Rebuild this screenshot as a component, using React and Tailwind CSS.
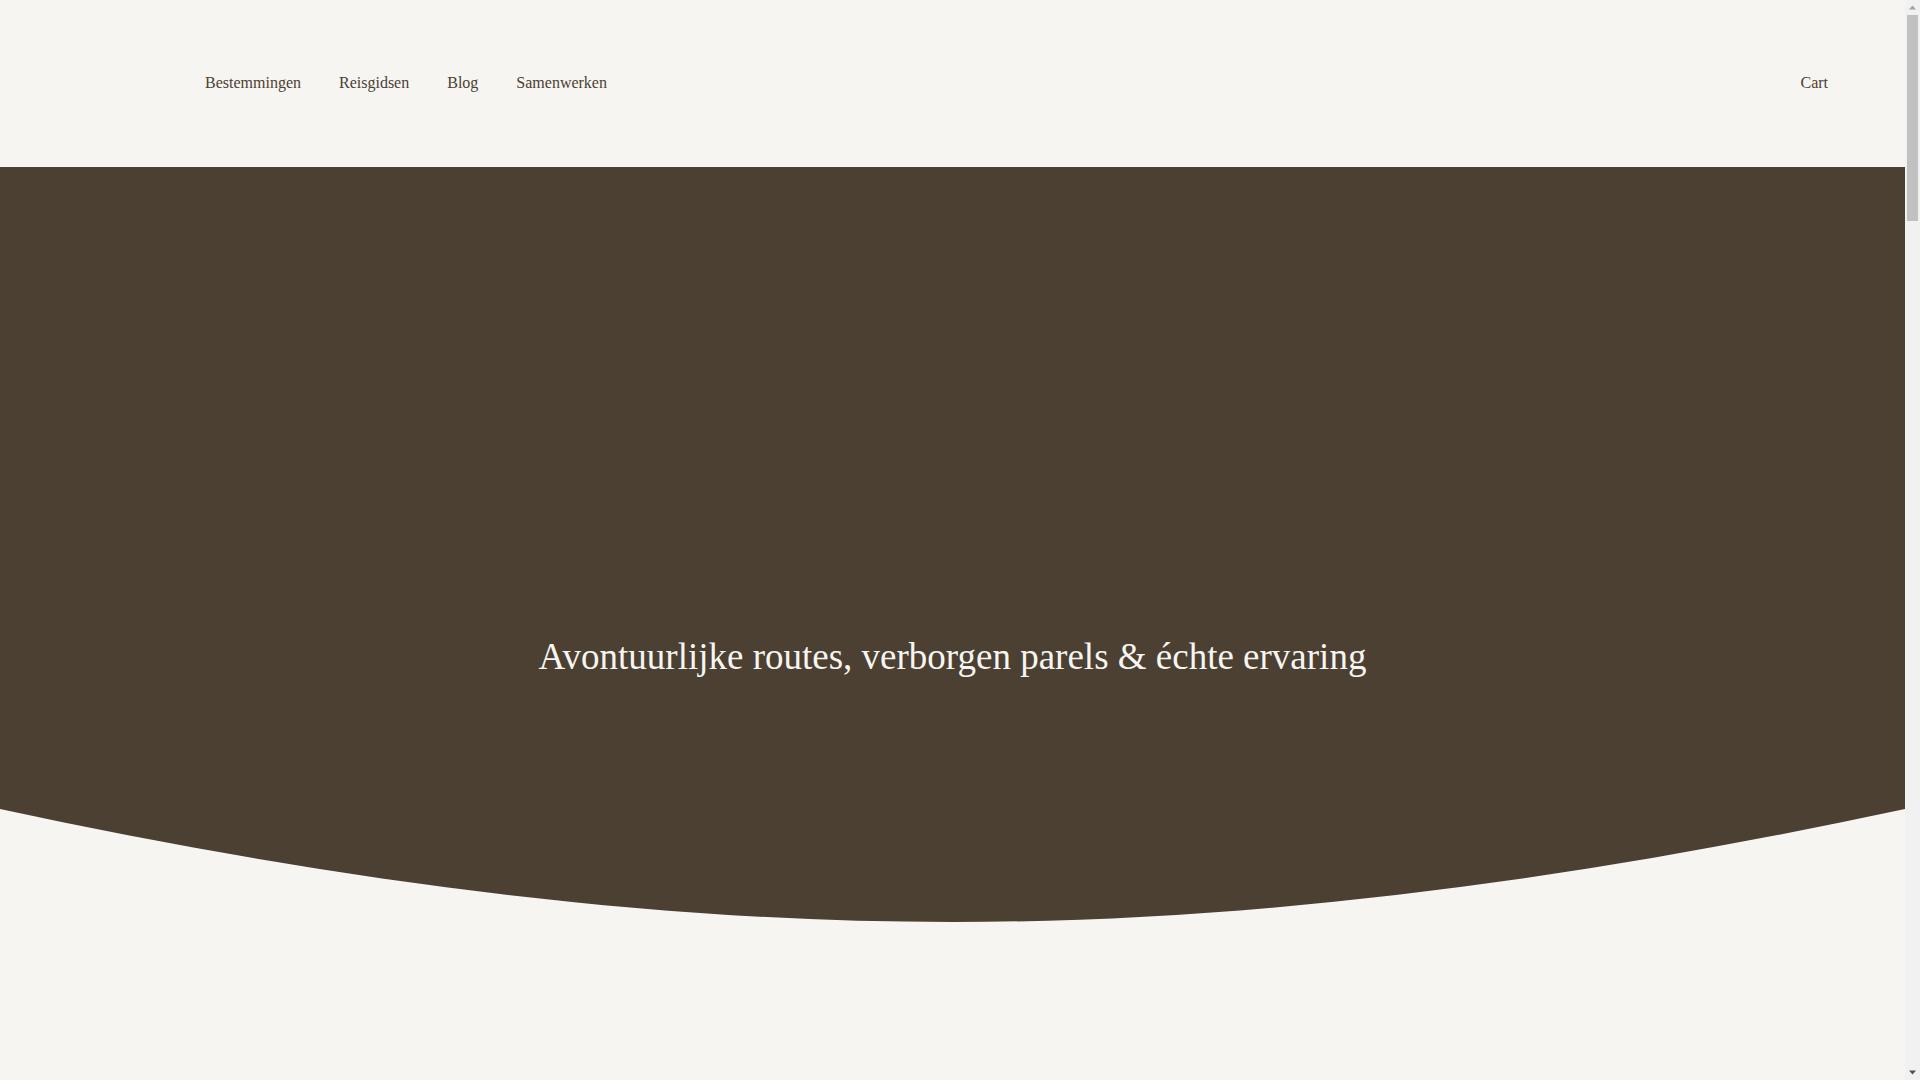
import React from 'react'

const navItems = ['Bestemmingen', 'Reisgidsen', 'Blog', 'Samenwerken']

// bottom edge of the hero: a soft bowl, symmetric around the middle
const curve = 'M0 0 C317.5 68.3 635 113 952.5 113 C1270 113 1587.5 68.3 1905 0 Z'

const Header = () => (
  <header className="h-[167px] px-[77px] pb-[2px] flex items-center justify-between bg-[#f6f5f1] text-[#4b4032]">
    <div className="flex items-center">
      {/* logo slot, empty in the reference */}
      <a href="#" className="block w-[90px] h-[40px]" aria-label="Home" />
      <nav className="ml-[38px] flex items-center gap-[38px] text-[16px] leading-6">
        {navItems.map((item) => (
          <a key={item} href="#" className="hover:opacity-70">
            {item}
          </a>
        ))}
      </nav>
    </div>
    <a href="#" className="text-[16px] leading-6 hover:opacity-70">
      Cart
    </a>
  </header>
)

const Hero = () => (
  <section>
    <div className="h-[642px] bg-[#4b4032] flex flex-col items-center justify-end pb-[130px]">
      <h1 className="text-[37px] leading-[44px] font-normal text-[#f6f5f1] text-center">
        Avontuurlijke routes, verborgen parels &amp; échte ervaring
      </h1>
    </div>
    <svg
      className="block w-full h-[113px]"
      viewBox="0 0 1905 113"
      preserveAspectRatio="none"
      aria-hidden="true"
    >
      <path d={curve} fill="#4b4032" />
    </svg>
  </section>
)

// classic scrollbar as seen in the screenshot
const Scrollbar = () => (
  <div className="w-[15px] h-full shrink-0 bg-[#f1f1f1] flex flex-col items-center">
    <svg width="15" height="15" viewBox="0 0 15 15" aria-hidden="true">
      <path d="M4 9.5 L7.5 5.5 L11 9.5 Z" fill="#a3a3a3" />
    </svg>
    <div className="w-[11px] h-[206px] bg-[#c1c1c1]" />
    <div className="flex-1" />
    <svg width="15" height="15" viewBox="0 0 15 15" aria-hidden="true">
      <path d="M4 5.5 L11 5.5 L7.5 9.5 Z" fill="#505050" />
    </svg>
  </div>
)

export default function App() {
  return (
    <div className="h-screen flex overflow-hidden bg-[#f6f5f1] font-['Liberation_Serif','Times_New_Roman',serif]">
      <div className="flex-1 overflow-y-auto [scrollbar-width:none]">
        <Header />
        <Hero />
        <main className="h-[4400px]" />
      </div>
      <Scrollbar />
    </div>
  )
}
